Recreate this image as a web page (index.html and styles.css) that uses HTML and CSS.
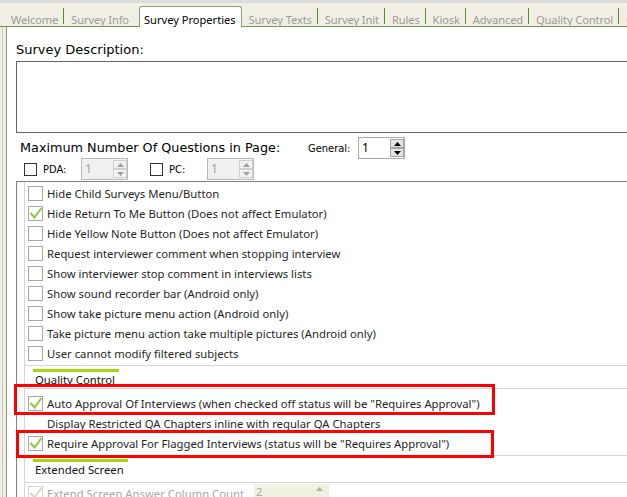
FILE: index.html
```html
<!DOCTYPE html>
<html>
<head>
<meta charset="utf-8">
<link rel="stylesheet" href="styles.css">
</head>
<body>
<div class="topline"></div>
<div class="tabs">
  <span class="tab first">Welcome</span><span class="sep"></span>
  <span class="tab">Survey Info</span>
  <span class="tab active">Survey Properties</span>
  <span class="tab">Survey Texts</span><span class="sep"></span>
  <span class="tab">Survey Init</span><span class="sep"></span>
  <span class="tab">Rules</span><span class="sep"></span>
  <span class="tab">Kiosk</span><span class="sep"></span>
  <span class="tab">Advanced</span><span class="sep"></span>
  <span class="tab">Quality Control</span><span class="sep"></span>
  <span class="tab">Questions</span>
</div>
<div class="main">
  <div class="gutter"></div>
  <div class="panel">
    <div class="lbl-big desc-label">Survey Description:</div>
    <div class="desc-box"></div>

    <div class="max-row">
      <span class="lbl-big max-label">Maximum Number Of Questions in Page:</span>
      <span class="small-lbl gen-label">General:</span>
      <div class="spin">
        <span class="spin-val">1</span>
        <div class="spin-btns">
          <span class="sbtn"><svg width="7" height="4" viewBox="0 0 7 4"><polygon points="0,4 3.5,0 7,4" fill="#000"/></svg></span>
          <span class="sbtn"><svg width="7" height="4" viewBox="0 0 7 4"><polygon points="0,0 3.5,4 7,0" fill="#000"/></svg></span>
        </div>
      </div>
    </div>

    <div class="dev-row">
      <span class="cb-plain"></span>
      <span class="small-lbl dev-label">PDA:</span>
      <div class="spin disabled">
        <span class="spin-val">1</span>
        <div class="spin-btns">
          <span class="sbtn"><svg width="7" height="4" viewBox="0 0 7 4"><polygon points="0,4 3.5,0 7,4" fill="#a0a0a0"/></svg></span>
          <span class="sbtn"><svg width="7" height="4" viewBox="0 0 7 4"><polygon points="0,0 3.5,4 7,0" fill="#a0a0a0"/></svg></span>
        </div>
      </div>
      <span class="cb-plain second"></span>
      <span class="small-lbl dev-label">PC:</span>
      <div class="spin disabled">
        <span class="spin-val">1</span>
        <div class="spin-btns">
          <span class="sbtn"><svg width="7" height="4" viewBox="0 0 7 4"><polygon points="0,4 3.5,0 7,4" fill="#a0a0a0"/></svg></span>
          <span class="sbtn"><svg width="7" height="4" viewBox="0 0 7 4"><polygon points="0,0 3.5,4 7,0" fill="#a0a0a0"/></svg></span>
        </div>
      </div>
    </div>

    <div class="list">
      <div class="inner">
        <div class="group g1">
          <div class="row"><span class="cb"></span><span>Hide Child Surveys Menu/Button</span></div>
          <div class="row"><span class="cb"><svg class="ck" viewBox="0 0 15 15"><path d="M2.5 7 L6.5 11.5 L13.5 2" fill="none" stroke="#8cc63f" stroke-width="2"/></svg></span><span>Hide Return To Me Button (Does not affect Emulator)</span></div>
          <div class="row"><span class="cb"></span><span>Hide Yellow Note Button (Does not affect Emulator)</span></div>
          <div class="row"><span class="cb"></span><span>Request interviewer comment when stopping interview</span></div>
          <div class="row"><span class="cb"></span><span>Show interviewer stop comment in interviews lists</span></div>
          <div class="row"><span class="cb"></span><span>Show sound recorder bar (Android only)</span></div>
          <div class="row"><span class="cb"></span><span>Show take picture menu action (Android only)</span></div>
          <div class="row"><span class="cb"></span><span>Take picture menu action take multiple pictures (Android only)</span></div>
          <div class="row"><span class="cb"></span><span>User cannot modify filtered subjects</span></div>
        </div>
        <div class="ghead">
          <div class="gbar qc"></div>
          <div class="gtitle">Quality Control</div>
        </div>
        <div class="group g2">
          <div class="row hl1"><span class="cb"><svg class="ck" viewBox="0 0 15 15"><path d="M2.5 7 L6.5 11.5 L13.5 2" fill="none" stroke="#8cc63f" stroke-width="2"/></svg></span><span>Auto Approval Of Interviews (when checked off status will be "Requires Approval")</span></div>
          <div class="row"><span class="cb blank"></span><span>Display Restricted QA Chapters inline with regular QA Chapters</span></div>
          <div class="row hl2"><span class="cb"><svg class="ck" viewBox="0 0 15 15"><path d="M2.5 7 L6.5 11.5 L13.5 2" fill="none" stroke="#8cc63f" stroke-width="2"/></svg></span><span>Require Approval For Flagged Interviews (status will be "Requires Approval")</span></div>
        </div>
        <div class="ghead ext">
          <div class="gbar es"></div>
          <div class="gtitle">Extended Screen</div>
        </div>
        <div class="group g3">
          <div class="row dis"><span class="cb"><svg class="ck" viewBox="0 0 15 15"><path d="M2.5 7 L6.5 11.5 L13.5 2" fill="none" stroke="#d2dccb" stroke-width="2"/></svg></span><span class="ext-label">Extend Screen Answer Column Count</span>
            <div class="ext-spin"><span>2</span><svg width="7" height="4" viewBox="0 0 7 4"><polygon points="0,4 3.5,0 7,4" fill="#a9b69c"/></svg></div>
          </div>
        </div>
      </div>
    </div>
  </div>
</div>
</body>
</html>
```
FILE: styles.css
```css
html, body {
  margin: 0;
  padding: 0;
}
body {
  width: 627px;
  height: 497px;
  overflow: hidden;
  background: #f1efe3;
  font-family: "Noto Sans", "DejaVu Sans", sans-serif;
  display: flex;
  flex-direction: column;
}
.topline {
  height: 3px;
  background: #dcdcdc;
  flex: none;
}
.tabs {
  flex: none;
  display: flex;
  align-items: flex-end;
  height: 23px;
  padding-left: 11px;
  border-bottom: 1px solid #6f9350;
  white-space: nowrap;
}
.tab {
  font-size: 11.1px;
  line-height: 13px;
  letter-spacing: -0.1px;
  color: #9b9b9b;
  padding: 0 5px 0 7px;
}
.tab.first {
  padding-left: 0;
}
.tab.active {
  color: #000;
  letter-spacing: 0;
  background: #fff;
  border: 1px solid #8aa17a;
  border-bottom: none;
  border-radius: 3px 3px 0 0;
  padding: 6px 5px 1px 4px;
  margin: 0 0 -1px 5px;
}
.sep {
  flex: none;
  width: 1px;
  height: 16px;
  margin-bottom: 2px;
  background: #5a8a3c;
}
.main {
  flex: 1;
  display: flex;
  min-height: 0;
}
.gutter {
  flex: none;
  width: 6px;
  background: linear-gradient(to right, #f1efe3 2px, #c8c8bf 2px, #c8c8bf 3px, #f1efe3 3px);
}
.panel {
  flex: 1;
  min-width: 0;
  background: #fff;
  border-left: 1px solid #86a06f;
  padding-left: 9px;
  overflow: hidden;
}
.lbl-big {
  font-family: "DejaVu Sans", sans-serif;
  font-size: 13px;
  line-height: 16px;
  color: #000;
  white-space: nowrap;
}
.desc-label {
  margin-top: 15px;
}
.desc-box {
  margin-top: 3px;
  height: 70px;
  width: 640px;
  border: 1px solid #646464;
}
.max-row {
  display: flex;
  align-items: center;
  margin-top: 4px;
  height: 22px;
}
.max-label {
  flex: none;
  font-size: 12.8px;
  width: 288px;
  margin-left: 4px;
}
.small-lbl {
  flex: none;
  font-family: "DejaVu Sans Condensed", "DejaVu Sans", sans-serif;
  font-size: 11px;
  color: #000;
  white-space: nowrap;
}
.gen-label {
  width: 50px;
}
.spin {
  flex: none;
  width: 47px;
  height: 22px;
  box-sizing: border-box;
  border: 1px solid #a9a9a9;
  background: #fff;
  display: flex;
  justify-content: space-between;
  padding: 1px 0 1px 3px;
}
.spin-val {
  font-size: 12px;
  line-height: 17px;
  color: #000;
}
.spin-btns {
  display: flex;
  flex-direction: column;
  width: 14px;
}
.sbtn {
  height: 9px;
  box-sizing: border-box;
  border: 1px solid #a3a3a3;
  background: #e4e4e4;
  display: flex;
  align-items: center;
  justify-content: center;
}
.sbtn svg {
  display: block;
}
.spin.disabled {
  background: #f0f0f0;
  border-color: #b9b9b9;
}
.spin.disabled .spin-val {
  color: #a3a3a3;
}
.spin.disabled .sbtn {
  background: #f2f2f2;
  border-color: #d0d0d0;
}
.dev-row {
  display: flex;
  align-items: center;
  margin-top: -1px;
  height: 22px;
}
.cb-plain {
  flex: none;
  width: 13px;
  height: 13px;
  box-sizing: border-box;
  border: 1px solid #333;
  background: #fff;
  margin-left: 8px;
}
.cb-plain.second {
  margin-left: 22px;
}
.dev-label {
  width: 38px;
  margin-left: 6px;
}
.list {
  margin-top: 1px;
  width: 700px;
  border-top: 1px solid #828282;
  border-left: 1px solid #828282;
}
.inner {
  margin-left: 7px;
  border-left: 1px solid #d5d5d5;
}
.group {
  border-bottom: 1px solid #d5d5d5;
}
.g1 {
  padding: 1px 0 2px;
}
.g2 {
  border-top: 1px solid #d5d5d5;
  padding: 4px 0 2px;
}
.g3 {
  border-top: 1px solid #d5d5d5;
  border-bottom: none;
}
.row {
  position: relative;
  height: 20px;
  display: flex;
  align-items: center;
  padding-left: 3px;
  font-size: 11.3px;
  color: #1f1f1f;
  white-space: nowrap;
}
.cb {
  flex: none;
  position: relative;
  width: 15px;
  height: 15px;
  box-sizing: border-box;
  border: 1px solid #a7a7a7;
  background: #fff;
  margin-right: 4px;
}
.cb.blank {
  border-color: transparent;
}
.ck {
  position: absolute;
  left: -1px;
  top: -1px;
  width: 15px;
  height: 15px;
}
.hl1::after,
.hl2::after {
  content: "";
  position: absolute;
  box-sizing: border-box;
  border: 3px solid #ff0000;
}
.hl1::after {
  left: -11px;
  top: -9px;
  width: 481px;
  height: 31px;
}
.hl2::after {
  left: -9px;
  top: -3px;
  width: 478px;
  height: 28px;
}
.ghead {
  padding-left: 8px;
}
.gbar {
  margin-top: 3px;
  height: 3px;
  background: #a6d60f;
}
.gbar.qc {
  width: 86px;
}
.gbar.es {
  width: 95px;
}
.gtitle {
  padding-left: 2px;
  font-size: 11.3px;
  line-height: 16px;
  color: #111;
  white-space: nowrap;
}
.ghead.ext .gtitle {
  margin-bottom: 4px;
}
.row.dis {
  color: #a9a9a9;
}
.row.dis .cb {
  border-color: #d6d6d6;
}
.ext-label {
  width: 207px;
}
.ext-spin {
  width: 75px;
  height: 20px;
  margin-top: 2px;
  background: #eef2e1;
  display: flex;
  justify-content: space-between;
  padding: 0 6px 0 2px;
  box-sizing: border-box;
  color: #a9a9a9;
}
.ext-spin svg {
  margin-top: 3px;
}
```
